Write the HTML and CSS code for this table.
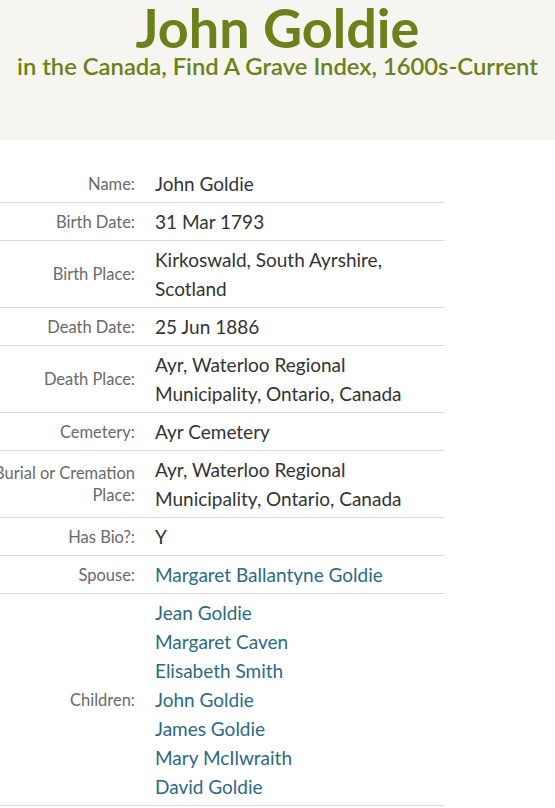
FILE: index.html
```html
<!DOCTYPE html>
<html lang="en">
<head>
    <meta charset="UTF-8">
    <meta name="viewport" content="width=device-width, initial-scale=1.0">
    <title>John Goldie - Canada, Find A Grave Index</title>
    <link rel="stylesheet" href="styles.css">
</head>
<body>
    <div class="page-header">
        <h1 class="title">John Goldie</h1>
        <h2 class="subtitle">in the Canada, Find A Grave Index, 1600s-Current</h2>
    </div>

    <table class="record">
        <tr>
            <th>Name:</th>
            <td>John Goldie</td>
        </tr>
        <tr>
            <th>Birth Date:</th>
            <td>31 Mar 1793</td>
        </tr>
        <tr>
            <th>Birth Place:</th>
            <td>Kirkoswald, South Ayrshire, Scotland</td>
        </tr>
        <tr>
            <th>Death Date:</th>
            <td>25 Jun 1886</td>
        </tr>
        <tr>
            <th>Death Place:</th>
            <td>Ayr, Waterloo Regional Municipality, Ontario, Canada</td>
        </tr>
        <tr>
            <th>Cemetery:</th>
            <td>Ayr Cemetery</td>
        </tr>
        <tr>
            <th>Burial or Cremation Place:</th>
            <td>Ayr, Waterloo Regional Municipality, Ontario, Canada</td>
        </tr>
        <tr>
            <th>Has Bio?:</th>
            <td>Y</td>
        </tr>
        <tr>
            <th>Spouse:</th>
            <td><a href="#">Margaret Ballantyne Goldie</a></td>
        </tr>
        <tr>
            <th>Children:</th>
            <td>
                <a href="#">Jean Goldie</a><br>
                <a href="#">Margaret Caven</a><br>
                <a href="#">Elisabeth Smith</a><br>
                <a href="#">John Goldie</a><br>
                <a href="#">James Goldie</a><br>
                <a href="#">Mary McIlwraith</a><br>
                <a href="#">David Goldie</a>
            </td>
        </tr>
    </table>
</body>
</html>
```

FILE: styles.css
```css
body {
    font-family: Lato, "Open Sans", sans-serif;
    margin: 0;
    padding: 0;
    background: #fff;
    overflow: hidden;
}
.page-header {
    background-color: #f6f5f1;
    height: 140px;
    text-align: center;
}
.title {
    margin: 0;
    font-size: 54px;
    line-height: 56px;
    font-weight: 700;
    color: #6b8119;
}
.subtitle {
    margin: 0;
    font-size: 23.8px;
    line-height: 20px;
    font-weight: 600;
    color: #6b8119;
}
.record {
    margin: 25px 0 0 -15px;
    width: 460px;
    border-collapse: collapse;
}
.record th,
.record td {
    padding: 4px 0;
    border-bottom: 1px solid #dcdcdc;
    vertical-align: middle;
}
.record th {
    width: 150px;
    text-align: right;
    font-weight: normal;
    font-size: 16.5px;
    line-height: 22px;
    color: #6a6a6a;
}
.record td {
    padding-left: 20px;
    font-size: 19px;
    line-height: 29px;
    color: #333;
}
.record a {
    color: #2c6a86;
    text-decoration: none;
}
```
